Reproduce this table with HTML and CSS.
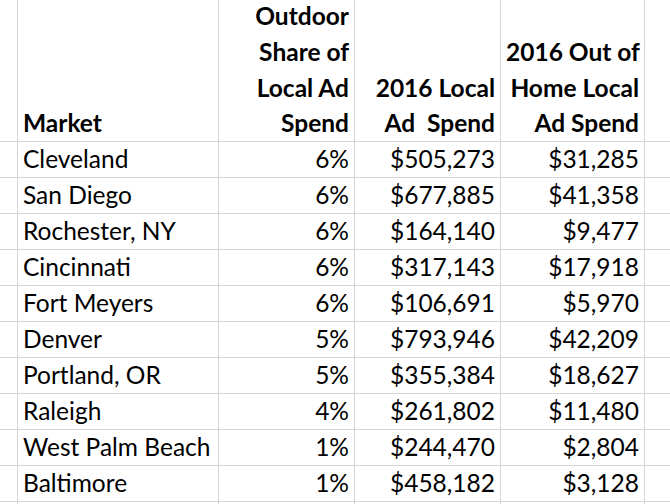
FILE: index.html
```html
<!DOCTYPE html>
<html>
<head>
<meta charset="utf-8">
<link rel="stylesheet" href="styles.css">
</head>
<body>
<table class="sheet">
  <colgroup>
    <col class="c-edge">
    <col class="c-market">
    <col class="c-share">
    <col class="c-local">
    <col class="c-ooh">
    <col class="c-rest">
  </colgroup>
  <thead>
    <tr class="head">
      <th></th>
      <th class="left">Market</th>
      <th>Outdoor<br>Share of<br>Local Ad<br>Spend</th>
      <th>2016 Local<br>Ad&nbsp; Spend</th>
      <th>2016 Out of<br>Home Local<br>Ad Spend</th>
      <th></th>
    </tr>
  </thead>
  <tbody>
    <tr><td></td><td class="left">Cleveland</td><td>6%</td><td>$505,273</td><td>$31,285</td><td></td></tr>
    <tr><td></td><td class="left">San Diego</td><td>6%</td><td>$677,885</td><td>$41,358</td><td></td></tr>
    <tr><td></td><td class="left">Rochester, NY</td><td>6%</td><td>$164,140</td><td>$9,477</td><td></td></tr>
    <tr><td></td><td class="left">Cincinnati</td><td>6%</td><td>$317,143</td><td>$17,918</td><td></td></tr>
    <tr><td></td><td class="left">Fort Meyers</td><td>6%</td><td>$106,691</td><td>$5,970</td><td></td></tr>
    <tr><td></td><td class="left">Denver</td><td>5%</td><td>$793,946</td><td>$42,209</td><td></td></tr>
    <tr><td></td><td class="left">Portland, OR</td><td>5%</td><td>$355,384</td><td>$18,627</td><td></td></tr>
    <tr><td></td><td class="left">Raleigh</td><td>4%</td><td>$261,802</td><td>$11,480</td><td></td></tr>
    <tr><td></td><td class="left">West Palm Beach</td><td>1%</td><td>$244,470</td><td>$2,804</td><td></td></tr>
    <tr><td></td><td class="left">Baltimore</td><td>1%</td><td>$458,182</td><td>$3,128</td><td></td></tr>
    <tr><td></td><td class="left"></td><td></td><td></td><td></td><td></td></tr>
  </tbody>
</table>
</body>
</html>
```
FILE: styles.css
```css
html, body {
  margin: 0;
  padding: 0;
  background: #ffffff;
  overflow: hidden;
}
body {
  width: 670px;
  height: 504px;
}
.sheet {
  border-collapse: collapse;
  table-layout: fixed;
  width: 700px;
  margin-top: -4px;
  margin-left: -1px;
  font-family: Lato, "Open Sans", sans-serif;
  font-size: 24.5px;
  color: #000;
}
.c-edge { width: 18px; }
.c-market { width: 201px; }
.c-share { width: 136px; }
.c-local { width: 146px; }
.c-ooh { width: 144px; }
.c-rest { width: 55px; }
.sheet th, .sheet td {
  border: 1px solid #d4d4d4;
  padding: 0 5px 0 5px;
  text-align: right;
  vertical-align: bottom;
  white-space: nowrap;
  overflow: hidden;
}
.sheet th {
  font-weight: 700;
  line-height: 35.7px;
  height: 144px;
  padding-bottom: 0;
}
.sheet td {
  height: 33px;
  line-height: 33px;
  padding-bottom: 2px;
  font-weight: 400;
}
.sheet .left {
  text-align: left;
}
```
